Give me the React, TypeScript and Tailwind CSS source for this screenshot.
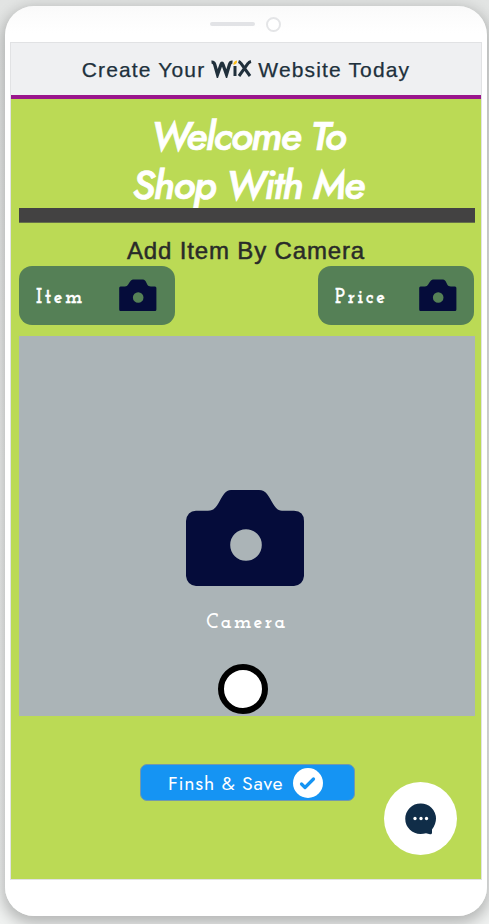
import React from "react";

function SmallCamera() {
  return (
    <svg width="38" height="33" viewBox="0 0 38 33" className="shrink-0" aria-hidden="true">
      <path
        fillRule="evenodd"
        fill="#050c3a"
        d="M1.5 7.5H6C9 7.5 9.5 4 12 1.5Q13.300 .4 14 .4H24Q25 .4 26 1.500C28.500 4.500 28 7.500 32 7.500H36Q37.400 7.500 37.400 9V30.500Q37.400 32 36 32H1.500Q.2 32 .2 30.500V9Q.2 7.500 1.500 7.500ZM19.200 13.200a5.300 5.300 0 1 0 0 10.600a5.300 5.300 0 1 0 0-10.600Z"
      />
    </svg>
  );
}

function LargeCamera() {
  return (
    <svg width="118" height="96" viewBox="0 0 118 96" aria-hidden="true">
      <path
        fillRule="evenodd"
        fill="#050c3a"
        d="M10 20.700H22C31 20.700 32 12 38 4Q41 0 45 0H73Q78 0 81 4C87 12 89 20.700 96 20.700H108Q118 21 118 31V86Q117 95 108 96H10Q1 95 0 86V31Q1 21 10 20.700ZM60 39.200a15.800 15.800 0 1 0 0 31.600a15.800 15.800 0 1 0 0-31.600Z"
      />
    </svg>
  );
}

function CaptureButton({ label, inset }: { label: string; inset: string }) {
  return (
    <button className={`flex h-[59px] w-[156px] items-start justify-between rounded-[13px] bg-[#558056] pl-[17px] pt-[13px] ${inset}`}>
      <span className="mt-[6px] whitespace-nowrap font-['Josefin_Slab','DejaVu_Serif',serif] text-[19.500px] leading-[27px] font-bold tracking-[2.600px] text-white [-webkit-text-stroke:0.300px_white]">
        {label}
      </span>
      <SmallCamera />
    </button>
  );
}

export default function App() {
  return (
    <div className="h-[924px] w-[489px] overflow-hidden bg-gradient-to-b from-[#e2e4e3] via-[#eef0ef] to-[#f0f2f1] pt-[6px] pl-[5px]">
      <main className="h-[910px] w-[481.500px] rounded-[29px] bg-gradient-to-b from-[#fafafa] via-white via-[3%] to-white pl-[5px] shadow-[0_5px_14px_3px_rgba(0,0,0,0.24)]">
        <div className="flex h-[36px] items-center justify-center gap-[11px] pr-[6px]">
          <span className="h-[4.500px] w-[45px] rounded-full bg-[#e2e3e6]" />
          <span className="size-[15px] rounded-full border-2 border-[#e4e5e7] bg-white" />
        </div>

        <div className="flex h-[838px] w-[472px] flex-col border border-[#e1e2e4] bg-[#bbda55]">
          <header className="flex h-[56px] shrink-0 items-center justify-center border-b-4 border-[#9a168c] bg-[#eff0f2] pt-px font-['Liberation_Sans',Arial,sans-serif] text-[21px] tracking-[1.150px] whitespace-nowrap text-[#20303c] [-webkit-text-stroke:0.250px_#20303c]">
            <span>Create Your</span>
            <svg width="41" height="18" viewBox="0 0 41 18" className="mx-[6px] mb-[2px]" fill="none" aria-label="WiX">
              <path d="M.5 2.200Q3 2 3.700 4.500L6.500 14.500L10 4.500Q11 2 12 4.500L15.500 14.500L18.500 4.500Q19.300 2 21.500 2.200" stroke="#20303c" strokeWidth="3.300" />
              <path d="M24 6V16" stroke="#20303c" strokeWidth="3" />
              <path d="M22.500 5Q22 1 26 .5Q26.500 4 22.500 5Z" fill="#fbbd19" />
              <path d="M27.500 1.500Q29 2 30 3.500L39 16M40 1.500Q38 2 37 3.500L28 16" stroke="#20303c" strokeWidth="3" />
            </svg>
            <span>Website Today</span>
          </header>

          <section className="flex flex-1 flex-col px-[8px]">
            <div className="flex h-[109px] shrink-0 flex-col items-center pt-[13px] pl-[4px] font-['Futura','Jost','Lato',sans-serif] text-[40px] leading-[49px] font-medium whitespace-nowrap text-white italic [-webkit-text-stroke:0.700px_white]">
              <span className="tracking-[-1.500px]">Welcome To</span>
              <span className="tracking-[-1.350px]">Shop With Me</span>
            </div>
            <div className="z-10 -mr-[2px] h-[15px] shrink-0 border-b border-[#65704a] bg-[#434242]" />

            <h1 className="flex h-[43px] shrink-0 items-center justify-center pt-[12px] font-['Liberation_Sans',Arial,sans-serif] text-[24px] tracking-[0.850px] whitespace-nowrap text-[#292b29] [-webkit-text-stroke:0.500px_#292b29]">
              Add Item By Camera
            </h1>
            <div className="flex w-[455px] justify-between">
              <CaptureButton label="Item" inset="pr-[18px]" />
              <CaptureButton label="Price" inset="pr-[17px]" />
            </div>

            <div className="mt-[11px] flex h-[380px] w-[456px] flex-col items-center bg-[#abb4b7] pt-[154px]">
              <div className="-ml-[5px] h-[96px]"><LargeCamera /></div>
              <span className="mt-[22px] font-['Josefin_Slab','DejaVu_Serif',serif] text-[20px] leading-[30px] font-bold tracking-[2.300px] text-white">
                Camera
              </span>
              <button aria-label="Take photo" className="mt-[26px] -ml-[9px] size-[50px] shrink-0 rounded-full border-[6px] border-black bg-white" />
            </div>

            <button className="mt-[48px] ml-[121px] flex h-[37px] w-[215px] items-center rounded-[7px] border border-[#7299ac] bg-[#1594f3] pl-[27px] whitespace-nowrap text-white">
              <span className="font-['Futura','Jost','Lato',sans-serif] text-[19.500px] leading-[28px] tracking-[0.750px]">Finsh &amp; Save</span>
              <svg width="30" height="30" viewBox="0 0 30 30" className="mr-[31px] ml-auto" aria-hidden="true">
                <circle cx="15" cy="15" r="15" fill="white" />
                <path d="M8.500 16L12 19.500L20.500 11" stroke="#1594f3" strokeWidth="3.200" fill="none" strokeLinecap="round" strokeLinejoin="round" />
              </svg>
            </button>
            <button aria-label="Open chat" className="-mt-[19px] mr-[16px] flex size-[73px] shrink-0 items-center justify-center self-end rounded-full bg-white">
              <svg width="31" height="32" viewBox="0 0 31 32" aria-hidden="true">
                <path d="M15.500.5A15 15 0 0 1 31 15.500Q31 21 27 26.500V29.500Q27 31.700 25 31.300L21 30.200Q18.500 31 15.500 31A15.250 15.250 0 0 1 15.500.5Z" fill="#102d48" />
                <g fill="white"><circle cx="10" cy="15.500" r="1.650" /><circle cx="16" cy="15.500" r="1.650" /><circle cx="21.500" cy="15.500" r="1.650" /></g>
              </svg>
            </button>
          </section>
        </div>
      </main>
    </div>
  );
}
